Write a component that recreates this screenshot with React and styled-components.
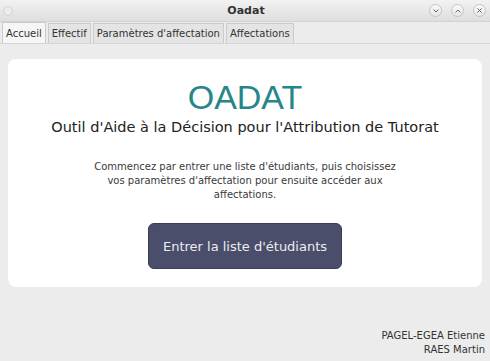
import React from "react";
import styled, { createGlobalStyle } from "styled-components";

const GlobalStyle = createGlobalStyle`
  html, body {
    margin: 0;
    padding: 0;
    background: #ececec;
  }
  body {
    font-family: "DejaVu Sans", sans-serif;
  }
`;

const Window = styled.div`
  width: 490px;
  height: 361px;
  display: flex;
  flex-direction: column;
  background: #ececec;
  overflow: hidden;
`;

const TitleBar = styled.div`
  height: 22px;
  display: flex;
  align-items: center;
  justify-content: space-between;
  padding: 0 4px 0 3px;
  background: linear-gradient(#f2f2f2, #dedede);
  border-bottom: 1px solid #d2d2d2;
  box-sizing: border-box;
`;

const Title = styled.div`
  flex: 1;
  text-align: center;
  font-size: 11px;
  font-weight: bold;
  color: #333;
  padding-left: 50px;
`;

const Dot = styled.span`
  width: 10px;
  height: 10px;
  border-radius: 50%;
  border: 1px solid #d4d4d4;
  background: #ececec;
  box-sizing: border-box;
`;

const Controls = styled.div`
  display: flex;
  gap: 9px;
`;

const CtrlButton = styled.span`
  width: 13px;
  height: 13px;
  border-radius: 50%;
  border: 1px solid #c4c4c4;
  background: linear-gradient(#fafafa, #e6e6e6);
  box-sizing: border-box;
  display: flex;
  align-items: center;
  justify-content: center;
`;

const TabBar = styled.div`
  height: 22px;
  display: flex;
  align-items: flex-end;
  padding-left: 2px;
  gap: 2px;
  border-bottom: 1px solid #d6d6d6;
  box-sizing: border-box;
`;

const Tab = styled.div`
  height: ${(p) => (p.$active ? "21px" : "20px")};
  display: flex;
  align-items: center;
  padding: 0 3px;
  font-size: 10px;
  color: #333;
  background: ${(p) => (p.$active ? "#f6f6f6" : "#e4e4e4")};
  border: 1px solid #cbcbcb;
  border-bottom: none;
  box-sizing: border-box;
`;

const Content = styled.div`
  flex: 1;
  display: flex;
  flex-direction: column;
  padding: 15px 8px 0;
`;

const Card = styled.div`
  height: 228px;
  background: #fff;
  border-radius: 8px;
  display: flex;
  flex-direction: column;
  align-items: center;
  box-sizing: border-box;
  padding-top: 19px;
`;

const Brand = styled.h1`
  margin: 0;
  font-family: "Liberation Sans", Arial, sans-serif;
  font-weight: normal;
  font-size: 34px;
  line-height: 39px;
  color: #27868a;
`;

const Subtitle = styled.h2`
  margin: 1px 0 0;
  font-weight: normal;
  font-size: 14.5px;
  line-height: 18px;
  color: #222;
`;

const Intro = styled.p`
  margin: 24px 0 0;
  width: 320px;
  text-align: center;
  font-size: 10px;
  line-height: 14px;
  color: #3a3a3a;
`;

const MainButton = styled.button`
  margin-top: 21px;
  width: 194px;
  height: 46px;
  border-radius: 6px;
  border: 1px solid #3a3d55;
  background: #4a4e6a;
  color: #ececf2;
  font-family: "DejaVu Sans", sans-serif;
  font-size: 13px;
  cursor: pointer;
`;

const Footer = styled.div`
  margin-top: auto;
  padding: 0 0 4px;
  text-align: right;
  font-size: 10px;
  line-height: 14px;
  color: #333;
  margin-right: -3px;
`;

const Chevron = ({ up }) => (
  <svg width="6" height="4" viewBox="0 0 6 4">
    <path
      d={up ? "M0.5 3.5 L3 1 L5.5 3.5" : "M0.5 0.5 L3 3 L5.5 0.5"}
      fill="none"
      stroke="#666"
      strokeWidth="1"
    />
  </svg>
);

const Cross = () => (
  <svg width="5" height="5" viewBox="0 0 6 6">
    <path d="M0.5 0.5 L5.5 5.5 M5.5 0.5 L0.5 5.5" stroke="#666" strokeWidth="1.2" />
  </svg>
);

const tabs = ["Accueil", "Effectif", "Paramètres d'affectation", "Affectations"];

export default function App() {
  return (
    <>
      <GlobalStyle />
      <Window>
        <TitleBar>
          <Dot />
          <Title>Oadat</Title>
          <Controls>
            <CtrlButton>
              <Chevron />
            </CtrlButton>
            <CtrlButton>
              <Chevron up />
            </CtrlButton>
            <CtrlButton>
              <Cross />
            </CtrlButton>
          </Controls>
        </TitleBar>
        <TabBar>
          {tabs.map((t, i) => (
            <Tab key={t} $active={i === 0}>
              {t}
            </Tab>
          ))}
        </TabBar>
        <Content>
          <Card>
            <Brand>OADAT</Brand>
            <Subtitle>Outil d'Aide à la Décision pour l'Attribution de Tutorat</Subtitle>
            <Intro>
              Commencez par entrer une liste d'étudiants, puis choisissez
              <br />
              vos paramètres d'affectation pour ensuite accéder aux
              <br />
              affectations.
            </Intro>
            <MainButton>Entrer la liste d'étudiants</MainButton>
          </Card>
          <Footer>
            PAGEL-EGEA Etienne
            <br />
            RAES Martin
          </Footer>
        </Content>
      </Window>
    </>
  );
}
